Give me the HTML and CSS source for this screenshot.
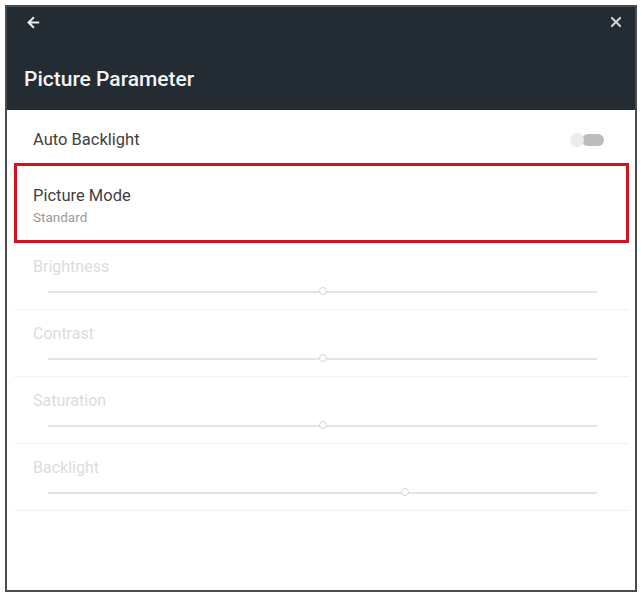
FILE: index.html
```html
<!DOCTYPE html>
<html lang="en">
<head>
    <meta charset="UTF-8">
    <meta name="viewport" content="width=device-width, initial-scale=1.0">
    <title>Picture Parameter</title>
    <link rel="stylesheet" href="styles.css">
</head>
<body>
    <div class="panel">
        <div class="header">
            <div class="header-bar">
                <svg class="icon" width="17" height="17" viewBox="0 0 24 24">
                    <path d="M20 10.5H8.6l5-5L11.5 3.4 3 12l8.5 8.6 2.1-2.1-5-5H20z" fill="#e8eaec"/>
                </svg>
                <svg class="icon" width="14" height="14" viewBox="0 0 24 24">
                    <path d="M5 5l14 14M19 5L5 19" stroke="#d3d6d9" stroke-width="3.6" stroke-linecap="round"/>
                </svg>
            </div>
            <h1>Picture Parameter</h1>
        </div>
        <div class="list">
            <div class="row switch-row">
                <span class="label">Auto Backlight</span>
                <span class="toggle"><span class="knob"></span></span>
            </div>
            <div class="row mode-row">
                <span class="label">Picture Mode</span>
                <span class="sub">Standard</span>
            </div>
            <div class="row slider-row">
                <span class="label dim">Brightness</span>
                <div class="track"><span class="thumb" style="left: 50%"></span></div>
            </div>
            <div class="row slider-row">
                <span class="label dim">Contrast</span>
                <div class="track"><span class="thumb" style="left: 50%"></span></div>
            </div>
            <div class="row slider-row">
                <span class="label dim">Saturation</span>
                <div class="track"><span class="thumb" style="left: 50%"></span></div>
            </div>
            <div class="row slider-row">
                <span class="label dim">Backlight</span>
                <div class="track"><span class="thumb" style="left: 65%"></span></div>
            </div>
        </div>
    </div>
</body>
</html>
```

FILE: styles.css
```css
body {
    margin: 0;
    padding: 5px 5px 4px 5px;
    background-color: #fff;
    font-family: Roboto, "Liberation Sans", Arial, sans-serif;
}
.panel {
    width: 628px;
    height: 583px;
    border: 2px solid #4a4d50;
    background-color: #fff;
    display: flex;
    flex-direction: column;
}
.header {
    background-color: #232b33;
    height: 103px;
    padding: 0 12px 0 17px;
    box-sizing: border-box;
}
.header-bar {
    display: flex;
    justify-content: space-between;
    align-items: center;
    height: 30px;
    padding-left: 1px;
}
.icon {
    display: block;
}
h1 {
    margin: 29px 0 0 0;
    color: #f2f3f4;
    font-size: 21px;
    font-weight: 500;
    line-height: 26px;
}
.list {
    padding: 6px 6px 0 7px;
    display: flex;
    flex-direction: column;
}
.row {
    padding: 0 19px;
    box-sizing: border-box;
}
.label {
    color: #3f3f3f;
    font-size: 16.5px;
    line-height: 20px;
}
.switch-row {
    height: 47px;
    display: flex;
    justify-content: space-between;
    align-items: center;
}
.toggle {
    position: relative;
    width: 22px;
    height: 12px;
    margin-right: 6px;
    border-radius: 6px;
    background-color: #bcbcbc;
}
.knob {
    position: absolute;
    left: -12px;
    top: -1px;
    width: 14px;
    height: 14px;
    border-radius: 50%;
    background-color: #ececec;
}
.mode-row {
    height: 80px;
    border: 3px solid #d3131f;
    padding: 20px 16px 0 16px;
    display: flex;
    flex-direction: column;
}
.sub {
    color: #9a9a9a;
    font-size: 13.5px;
    line-height: 16px;
    margin-top: 3px;
}
.slider-row {
    height: 67px;
    padding-top: 14px;
    border-bottom: 1px solid #f1f1f1;
}
.label.dim {
    display: block;
    color: #dcdcdc;
    font-size: 16px;
}
.track {
    position: relative;
    height: 2px;
    margin: 14px 13px 0 15px;
    background-color: #e4e4e4;
}
.thumb {
    position: absolute;
    top: -4px;
    width: 6px;
    height: 6px;
    margin-left: -4px;
    border: 1px solid #d6d6d6;
    border-radius: 50%;
    background-color: #fff;
}
```
